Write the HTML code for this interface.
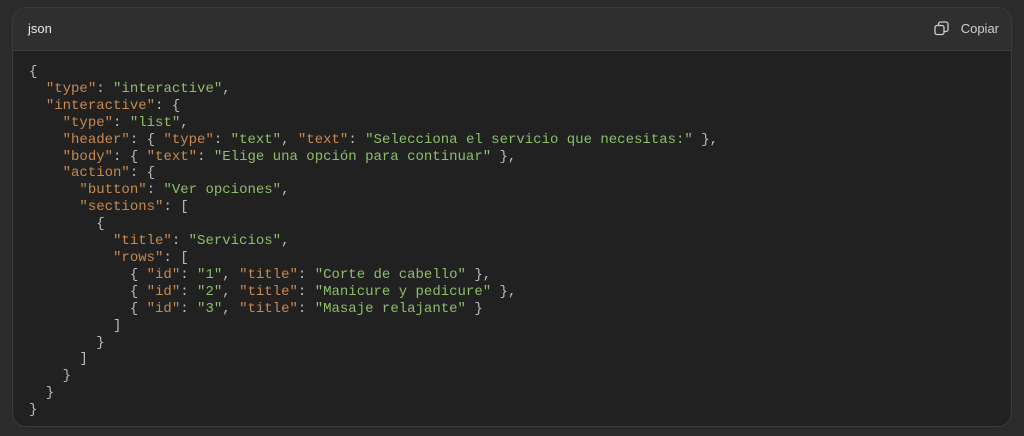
<!DOCTYPE html>
<html><head><meta charset="utf-8"><style>
html,body{margin:0;padding:0;background:#2b2b2b;width:1024px;height:436px;overflow:hidden}
.card{position:absolute;left:12px;top:7px;width:1000px;height:420px;border:1px solid #3a3a3a;border-radius:14px;background:#212121;overflow:hidden;box-sizing:border-box}
.hd{height:42px;background:#2f2f2f;border-bottom:1px solid #3a3a3a;position:relative;font-family:"Liberation Sans",sans-serif;font-size:13px;color:#e8e8e8}
.hd .l{position:absolute;left:15px;top:13px}
.hd .r{position:absolute;right:12px;top:13px;color:#cfcfcf}
.hd svg{position:absolute;right:62px;top:13px}
pre{margin:0;position:absolute;left:16px;top:56px;font-family:"Liberation Mono",monospace;font-size:14px;line-height:16.9px;color:#b8bcc4}
.k{color:#c9894f}.s{color:#8cbf6a}
</style></head><body>
<div class="card">
<div class="hd"><span class="l">json</span>
<svg width="15" height="15" viewBox="0 0 15 15" fill="none" stroke="#cfcfcf" stroke-width="1.3"><rect x="1" y="4.5" width="9" height="9" rx="2"/><path d="M4.5 4.5V3a2 2 0 0 1 2-2H12a2 2 0 0 1 2 2v5.5a2 2 0 0 1-2 2h-2"/></svg>
<span class="r">Copiar</span></div>
<pre>{
  <span class="k">"type"</span>: <span class="s">"interactive"</span>,
  <span class="k">"interactive"</span>: {
    <span class="k">"type"</span>: <span class="s">"list"</span>,
    <span class="k">"header"</span>: { <span class="k">"type"</span>: <span class="s">"text"</span>, <span class="k">"text"</span>: <span class="s">"Selecciona el servicio que necesitas:"</span> },
    <span class="k">"body"</span>: { <span class="k">"text"</span>: <span class="s">"Elige una opción para continuar"</span> },
    <span class="k">"action"</span>: {
      <span class="k">"button"</span>: <span class="s">"Ver opciones"</span>,
      <span class="k">"sections"</span>: [
        {
          <span class="k">"title"</span>: <span class="s">"Servicios"</span>,
          <span class="k">"rows"</span>: [
            { <span class="k">"id"</span>: <span class="s">"1"</span>, <span class="k">"title"</span>: <span class="s">"Corte de cabello"</span> },
            { <span class="k">"id"</span>: <span class="s">"2"</span>, <span class="k">"title"</span>: <span class="s">"Manicure y pedicure"</span> },
            { <span class="k">"id"</span>: <span class="s">"3"</span>, <span class="k">"title"</span>: <span class="s">"Masaje relajante"</span> }
          ]
        }
      ]
    }
  }
}</pre>
</div>
</body></html>
